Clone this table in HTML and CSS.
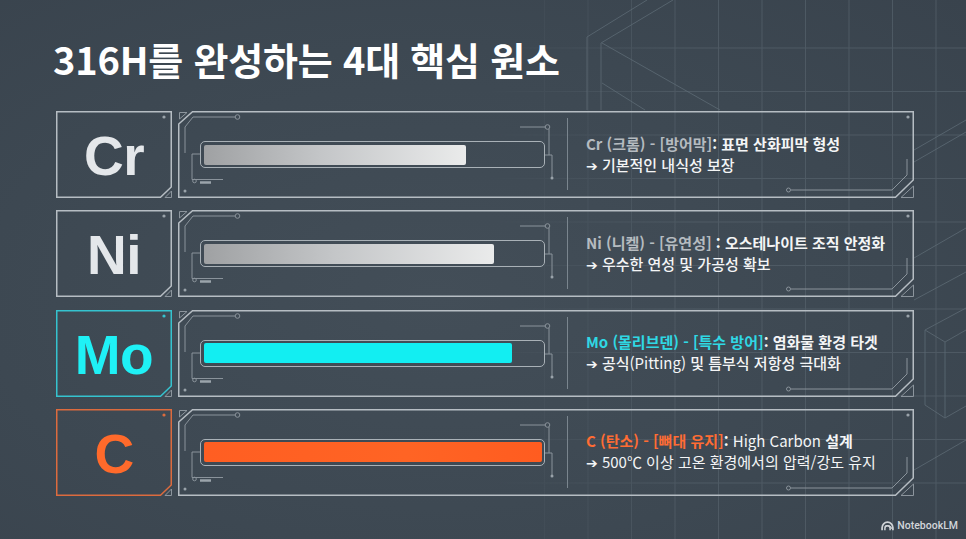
FILE: index.html
```html
<!DOCTYPE html>
<html lang="ko">
<head>
<meta charset="utf-8">
<title>316H를 완성하는 4대 핵심 원소</title>
<link rel="stylesheet" href="styles.css">
</head>
<body>
<div class="slide">
  <svg class="bg" width="966" height="539" viewBox="0 0 966 539">
    <defs>
      <linearGradient id="fade" x1="0" y1="0" x2="966" y2="0" gradientUnits="userSpaceOnUse">
        <stop offset="0.5" stop-color="#fff" stop-opacity="0"/>
        <stop offset="0.72" stop-color="#fff" stop-opacity="1"/>
      </linearGradient>
      <mask id="m"><rect width="966" height="539" fill="url(#fade)"/></mask>
    </defs>
    <g mask="url(#m)" stroke="#56626c" stroke-width="1" fill="none" opacity="0.7">
      <path d="M544.5 0V539M588 0V539M631.5 0V539M675 0V539M718.5 0V539M762 0V539M805.5 0V539M849 0V539M892.5 0V539M936 0V539"/>
      <path d="M0 48H966M0 91.5H966M0 135H966M0 178.5H966M0 222H966M0 265.5H966M0 309H966M0 352.5H966M0 396H966M0 439.5H966M0 483H966"/>
    </g>
    <g stroke="#5d6a74" stroke-width="1" fill="none" opacity="0.8">
      <path d="M587 37L647 0M601 43L673 0M587 37V110M601 43V110M602 43L720 110M602 83L645 110"/>
      <path d="M914 150L966 120M914 162L966 132M914 258L966 228M914 300L966 272M914 470L966 440"/>
      <path d="M925 330L966 308M925 330V405M945 342V418M925 330L945 342M925 405L945 418M945 342L966 330M945 418L966 406"/>
    </g>
  </svg>

  <div class="content">
    <h1 class="title">316H를 완성하는 4대 핵심 원소</h1>

    <div class="rows">
      <!-- Cr -->
      <div class="row">
        <div class="elem">
          <svg class="frame" width="116" height="87" viewBox="0 0 116 87">
            <path class="edge" d="M0.75 0.75H115.25V76L104.5 86.25H0.75Z"/>
            <path class="tri" d="M115.5 80V86.5H109Z"/>
            <circle class="dot" cx="108" cy="6" r="1.6"/>
          </svg>
          <span class="sym">Cr</span>
        </div>
        <div class="panel">
          <svg class="frame" width="736" height="87" viewBox="0 0 736 87">
            <path class="edge" d="M0.75 13L14.5 0.75H735.25V69L717.5 86.25H0.75Z"/>
            <path class="tri" d="M1.5 1.5H9L1.5 8Z"/>
            <path class="tri" d="M735.5 75V86.5H723Z"/>
            <path class="deco" d="M57 6H15L7 16V42"/>
            <circle class="ring" cx="59.5" cy="6" r="2.3"/>
            <path class="deco" d="M22 43H14V68.5H45"/>
            <circle class="ring" cx="16.5" cy="70" r="1.8"/>
            <path class="dash" d="M22 71.5H33"/>
            <circle class="dot" cx="7" cy="80" r="1.5"/>
            <path class="deco" d="M342 16H367M371 18V44M367 44H374V67"/>
            <circle class="ring" cx="369.5" cy="16" r="2.3"/>
            <circle class="dot" cx="374" cy="67" r="1.5"/>
            <path class="divider" d="M389.5 7V79"/>
            <circle class="dot" cx="730" cy="6" r="1.6"/>
            <path class="deco" d="M729 48V64L714 79H613"/>
            <circle class="ring" cx="610.5" cy="79" r="2"/>
          </svg>
          <div class="panel-body">
            <div class="bar-zone"><div class="track"><div class="fill fill-gray" style="width:77.7%"></div></div></div>
            <div class="text-zone">
              <p class="l1"><span class="lab">Cr (크롬) - [방어막]</span>: 표면 산화피막 형성</p>
              <p class="l2"><span class="arr">➔</span> 기본적인 내식성 보장</p>
            </div>
          </div>
        </div>
      </div>

      <!-- Ni -->
      <div class="row">
        <div class="elem">
          <svg class="frame" width="116" height="87" viewBox="0 0 116 87">
            <path class="edge" d="M0.75 0.75H115.25V76L104.5 86.25H0.75Z"/>
            <path class="tri" d="M115.5 80V86.5H109Z"/>
            <circle class="dot" cx="108" cy="6" r="1.6"/>
          </svg>
          <span class="sym">Ni</span>
        </div>
        <div class="panel">
          <svg class="frame" width="736" height="87" viewBox="0 0 736 87">
            <path class="edge" d="M0.75 13L14.5 0.75H735.25V69L717.5 86.25H0.75Z"/>
            <path class="tri" d="M1.5 1.5H9L1.5 8Z"/>
            <path class="tri" d="M735.5 75V86.5H723Z"/>
            <path class="deco" d="M57 6H15L7 16V42"/>
            <circle class="ring" cx="59.5" cy="6" r="2.3"/>
            <path class="deco" d="M22 43H14V68.5H45"/>
            <circle class="ring" cx="16.5" cy="70" r="1.8"/>
            <path class="dash" d="M22 71.5H33"/>
            <circle class="dot" cx="7" cy="80" r="1.5"/>
            <path class="deco" d="M342 16H367M371 18V44M367 44H374V67"/>
            <circle class="ring" cx="369.5" cy="16" r="2.3"/>
            <circle class="dot" cx="374" cy="67" r="1.5"/>
            <path class="divider" d="M389.5 7V79"/>
            <circle class="dot" cx="730" cy="6" r="1.6"/>
            <path class="deco" d="M729 48V64L714 79H613"/>
            <circle class="ring" cx="610.5" cy="79" r="2"/>
          </svg>
          <div class="panel-body">
            <div class="bar-zone"><div class="track"><div class="fill fill-gray" style="width:85.8%"></div></div></div>
            <div class="text-zone">
              <p class="l1"><span class="lab">Ni (니켈) - [유연성]</span> : 오스테나이트 조직 안정화</p>
              <p class="l2"><span class="arr">➔</span> 우수한 연성 및 가공성 확보</p>
            </div>
          </div>
        </div>
      </div>

      <!-- Mo -->
      <div class="row row-mo">
        <div class="elem">
          <svg class="frame" width="116" height="87" viewBox="0 0 116 87">
            <path class="edge" d="M0.75 0.75H115.25V76L104.5 86.25H0.75Z"/>
            <path class="tri" d="M115.5 80V86.5H109Z"/>
            <circle class="dot" cx="108" cy="6" r="1.6"/>
          </svg>
          <span class="sym">Mo</span>
        </div>
        <div class="panel">
          <svg class="frame" width="736" height="87" viewBox="0 0 736 87">
            <path class="edge" d="M0.75 13L14.5 0.75H735.25V69L717.5 86.25H0.75Z"/>
            <path class="tri" d="M1.5 1.5H9L1.5 8Z"/>
            <path class="tri" d="M735.5 75V86.5H723Z"/>
            <path class="deco" d="M57 6H15L7 16V42"/>
            <circle class="ring" cx="59.5" cy="6" r="2.3"/>
            <path class="deco" d="M22 43H14V68.5H45"/>
            <circle class="ring" cx="16.5" cy="70" r="1.8"/>
            <path class="dash" d="M22 71.5H33"/>
            <circle class="dot" cx="7" cy="80" r="1.5"/>
            <path class="deco" d="M342 16H367M371 18V44M367 44H374V67"/>
            <circle class="ring" cx="369.5" cy="16" r="2.3"/>
            <circle class="dot" cx="374" cy="67" r="1.5"/>
            <path class="divider" d="M389.5 7V79"/>
            <circle class="dot" cx="730" cy="6" r="1.6"/>
            <path class="deco" d="M729 48V64L714 79H613"/>
            <circle class="ring" cx="610.5" cy="79" r="2"/>
          </svg>
          <div class="panel-body">
            <div class="bar-zone"><div class="track"><div class="fill fill-cyan" style="width:91.4%"></div></div></div>
            <div class="text-zone">
              <p class="l1"><span class="lab">Mo (몰리브덴) - [특수 방어]</span>: 염화물 환경 타겟</p>
              <p class="l2"><span class="arr">➔</span> 공식<span class="lt">(Pitting)</span> 및 틈부식 저항성 극대화</p>
            </div>
          </div>
        </div>
      </div>

      <!-- C -->
      <div class="row row-c">
        <div class="elem">
          <svg class="frame" width="116" height="87" viewBox="0 0 116 87">
            <path class="edge" d="M0.75 0.75H115.25V76L104.5 86.25H0.75Z"/>
            <path class="tri" d="M115.5 80V86.5H109Z"/>
            <circle class="dot" cx="108" cy="6" r="1.6"/>
          </svg>
          <span class="sym">C</span>
        </div>
        <div class="panel">
          <svg class="frame" width="736" height="87" viewBox="0 0 736 87">
            <path class="edge" d="M0.75 13L14.5 0.75H735.25V69L717.5 86.25H0.75Z"/>
            <path class="tri" d="M1.5 1.5H9L1.5 8Z"/>
            <path class="tri" d="M735.5 75V86.5H723Z"/>
            <path class="deco" d="M57 6H15L7 16V42"/>
            <circle class="ring" cx="59.5" cy="6" r="2.3"/>
            <path class="deco" d="M22 43H14V68.5H45"/>
            <circle class="ring" cx="16.5" cy="70" r="1.8"/>
            <path class="dash" d="M22 71.5H33"/>
            <circle class="dot" cx="7" cy="80" r="1.5"/>
            <path class="deco" d="M342 16H367M371 18V44M367 44H374V67"/>
            <circle class="ring" cx="369.5" cy="16" r="2.3"/>
            <circle class="dot" cx="374" cy="67" r="1.5"/>
            <path class="divider" d="M389.5 7V79"/>
            <circle class="dot" cx="730" cy="6" r="1.6"/>
            <path class="deco" d="M729 48V64L714 79H613"/>
            <circle class="ring" cx="610.5" cy="79" r="2"/>
          </svg>
          <div class="panel-body">
            <div class="bar-zone"><div class="track"><div class="fill fill-orange" style="width:100%"></div></div></div>
            <div class="text-zone">
              <p class="l1"><span class="lab">C (탄소) - [뼈대 유지]</span>: <span class="lt">High Carbon</span> 설계</p>
              <p class="l2 l2-light"><span class="arr">➔</span> 500℃ 이상 고온 환경에서의 압력/강도 유지</p>
            </div>
          </div>
        </div>
      </div>
    </div>

    <div class="footer">
      <svg class="logo" width="13" height="10" viewBox="0 0 12 9">
        <path d="M1 8.5V6A5 5 0 0 1 11 6V8.5" fill="none" stroke="#cfd3d7" stroke-width="1.6"/>
        <path d="M3.6 8.5V6.6A2.4 2.4 0 0 1 8.4 6.6V8.5" fill="none" stroke="#cfd3d7" stroke-width="1.4"/>
        <path d="M3.6 5.2A4 4 0 0 1 10 7" fill="none" stroke="#cfd3d7" stroke-width="1.1"/>
      </svg>
      <span class="brand">NotebookLM</span>
    </div>
  </div>
</div>
</body>
</html>
```

FILE: styles.css
```css
* { box-sizing: border-box; }

html, body {
  margin: 0;
  padding: 0;
}

body {
  width: 966px;
  height: 539px;
  overflow: hidden;
  background: #3e4953;
  font-family: "Noto Sans CJK KR", "DejaVu Sans", sans-serif;
}

.slide {
  display: grid;
  width: 966px;
  height: 539px;
  background: radial-gradient(ellipse at 45% 55%, #434e58 0%, #3d4852 60%, #39434d 100%);
}

.bg,
.content {
  grid-area: 1 / 1;
}

.content {
  display: flex;
  flex-direction: column;
  height: 539px;
}

.title {
  margin: 38.5px 0 0 0;
  padding-left: 53px;
  font-family: "Noto Sans CJK KR", sans-serif;
  font-weight: 700;
  font-size: 38px;
  line-height: 40px;
  letter-spacing: -0.2px;
  color: #ffffff;
}

.rows {
  margin-top: 32.5px;
  padding-left: 56px;
  display: flex;
  flex-direction: column;
  gap: 12.3px;
}

.row {
  display: flex;
  gap: 6px;
  height: 87px;
}

.elem,
.panel {
  display: grid;
  height: 87px;
}

.elem { width: 116px; }
.panel { width: 736px; }

.frame,
.sym,
.panel-body {
  grid-area: 1 / 1;
}

.frame {
  overflow: visible;
}

.edge {
  fill: none;
  stroke: #b6bdc3;
  stroke-width: 1.5;
}

.tri {
  fill: none;
  stroke: #8c959d;
  stroke-width: 1;
}

.deco {
  fill: none;
  stroke: #8a939b;
  stroke-width: 1;
}

.ring {
  fill: none;
  stroke: #8a939b;
  stroke-width: 1;
}

.dot {
  fill: #9aa3aa;
}

.dash {
  stroke: #9ba4ab;
  stroke-width: 2.5;
}

.divider {
  stroke: #7a858e;
  stroke-width: 1;
}

.sym {
  display: flex;
  align-items: center;
  justify-content: center;
  padding-top: 3px;
  font-family: "Liberation Sans", Arial, sans-serif;
  font-weight: 700;
  font-size: 55px;
  color: #e4e7ea;
  letter-spacing: -0.5px;
}

.row-mo .elem .edge { stroke: #35c3cf; }
.row-mo .sym { color: #1ff1f6; }
.row-mo .elem .dot { fill: #35c3cf; }

.row-c .elem .edge { stroke: #dc6b3e; }
.row-c .sym { color: #ff6a2b; }
.row-c .elem .dot { fill: #dc6b3e; }

.panel-body {
  display: flex;
  height: 87px;
}

.bar-zone {
  width: 389px;
  padding-left: 22px;
  display: flex;
  align-items: center;
}

.track {
  width: 345px;
  height: 27px;
  border: 1.5px solid #a9b1b7;
  border-radius: 5px;
  padding: 2.5px;
}

.fill {
  height: 100%;
  border-radius: 2px;
}

.fill-gray {
  background: linear-gradient(90deg, #9fa1a3 0%, #c4c6c8 45%, #eaebeb 100%);
}

.fill-cyan {
  background: #12eef2;
}

.fill-orange {
  background: linear-gradient(90deg, #ff5e22 0%, #ff6424 60%, #ff5c20 100%);
}

.text-zone {
  flex: 1;
  padding-left: 19px;
  padding-top: 0;
  display: flex;
  flex-direction: column;
  justify-content: center;
}

.l1,
.l2 {
  margin: 0;
  font-size: 15px;
  line-height: 21px;
  white-space: nowrap;
  color: #f4f5f6;
}

.l1 {
  font-weight: 700;
}

.l2 {
  font-weight: 500;
}

.l2-light {
  font-weight: 400;
}

.arr {
  font-family: "DejaVu Sans", sans-serif;
  font-weight: 700;
  font-size: 14px;
}

.lab {
  color: #b5bbc0;
}

.row-mo .lab { color: #2fd8e4; }
.row-c .lab { color: #ff6c33; }

.lt {
  font-weight: 400;
}

.footer {
  margin-top: auto;
  display: flex;
  justify-content: flex-end;
  align-items: center;
  gap: 3px;
  padding: 0 8px 6px 0;
  height: 20px;
}

.logo {
  display: block;
}

.brand {
  font-family: Roboto, "Liberation Sans", sans-serif;
  font-weight: 500;
  font-size: 10.5px;
  line-height: 12px;
  color: #d2d6da;
}
```
